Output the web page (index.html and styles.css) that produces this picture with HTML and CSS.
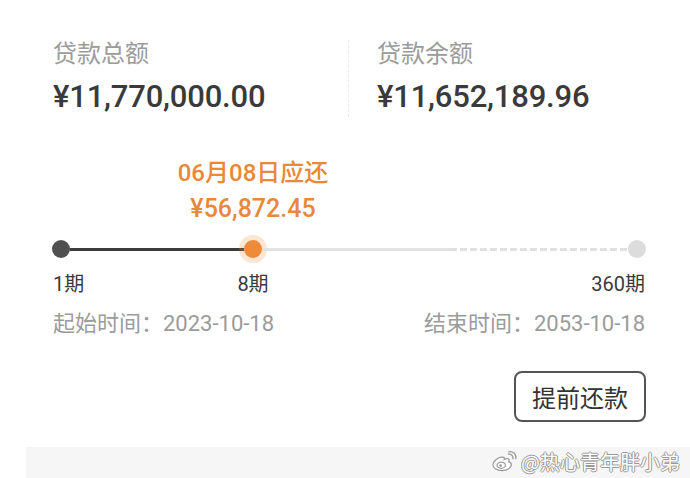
FILE: index.html
```html
<!DOCTYPE html>
<html lang="zh-CN">
<head>
<meta charset="utf-8">
<link rel="stylesheet" href="styles.css">
</head>
<body>
<div class="page">
  <section class="summary">
    <div class="col col-left">
      <div class="label">贷款总额</div>
      <div class="amount">¥11,770,000.00</div>
    </div>
    <div class="col col-right">
      <div class="label">贷款余额</div>
      <div class="amount">¥11,652,189.96</div>
    </div>
  </section>

  <section class="progress">
    <div class="due">
      <div class="due-date">06月08日应还</div>
      <div class="due-amount">¥56,872.45</div>
    </div>
    <div class="track">
      <span class="dot dot-start"></span>
      <span class="seg seg-done"></span>
      <span class="dot dot-current"></span>
      <span class="seg seg-rest"></span>
      <span class="seg seg-dashed"></span>
      <span class="dot dot-end"></span>
    </div>
    <div class="periods">
      <span class="p-first">1期</span>
      <span class="p-current">8期</span>
      <span class="p-last">360期</span>
    </div>
    <div class="dates">
      <span>起始时间：2023-10-18</span>
      <span>结束时间：2053-10-18</span>
    </div>
  </section>

  <div class="actions">
    <button class="btn-prepay">提前还款</button>
  </div>

  <div class="band">
    <div class="watermark">
      <svg class="weibo" width="26" height="22" viewBox="0 0 26 22">
        <path d="M10.5 6.2c-4.2 0.6-8.6 4.2-8.6 7.6 0 3.6 4.3 5.8 9 5.8 5.6 0 9.4-3 9.4-5.9 0-1.8-1.5-2.6-2.6-2.9 0.5-1.1 0.6-2.4-0.5-3-1.1-0.6-3 0.1-4 0.6 0.4-1.2 0.3-2.6-2.7-2.2z" fill="#fff" stroke="#9a9a9a" stroke-width="1.3"/>
        <ellipse cx="10.2" cy="14.2" rx="4.2" ry="3.1" fill="#fff" stroke="#9a9a9a" stroke-width="1.2"/>
        <circle cx="9.6" cy="14.6" r="1.3" fill="#9a9a9a"/>
        <path d="M17.5 3.2c2.6-0.5 4.9 1.6 4.4 4.4" fill="none" stroke="#9a9a9a" stroke-width="1.3" stroke-linecap="round"/>
        <path d="M17.8 0.8c4.2-0.8 7.8 2.6 7 6.9" fill="none" stroke="#9a9a9a" stroke-width="1.3" stroke-linecap="round"/>
      </svg>
      <span class="wm-text">@热心青年胖小弟</span>
    </div>
  </div>
</div>
</body>
</html>
```

FILE: styles.css
```css
* { box-sizing: border-box; }
html, body { margin: 0; padding: 0; background: #fff; }
body {
  font-family: Roboto, "Noto Sans CJK SC", "Noto Sans", sans-serif;
  color: #333;
}
.page { width: 690px; height: 478px; overflow: hidden; }

.summary {
  display: grid;
  grid-template-columns: 348px 1fr;
  padding-top: 36px;
}
.col-left { padding-left: 53px; }
.col-right {
  padding-left: 28px;
  border-left: 1px dashed #ececec;
  margin-top: 4px;
  margin-bottom: 6px;
}
.col-right .label { margin-top: -4px; }
.label {
  font-family: "Noto Sans CJK SC", sans-serif;
  font-size: 24px;
  line-height: 32px;
  color: #9b9b9b;
}
.amount {
  margin-top: 9px;
  font-size: 31px;
  line-height: 40px;
  font-weight: 500;
  color: #3a3a3a;
  letter-spacing: -0.2px;
}

.progress { margin-top: 36px; }
.due {
  width: 200px;
  margin-left: 153px;
  text-align: center;
  color: #e8893a;
  font-weight: 500;
}
.due-date {
  font-size: 24px;
  line-height: 28px;
}
.due-amount {
  margin-top: 8px;
  font-size: 25px;
  line-height: 28px;
}

.track {
  display: flex;
  align-items: center;
  width: 594px;
  height: 18px;
  margin: 17px 0 0 52px;
}
.dot {
  flex: none;
  width: 18px;
  height: 18px;
  border-radius: 50%;
}
.dot-start { background: #505050; }
.dot-current {
  background: #ef8b38;
  box-shadow: 0 0 0 5px rgba(239, 139, 56, 0.22);
}
.dot-end { background: #dcdcdc; }
.seg { flex: none; height: 3px; }
.seg-done { width: 174px; background: #3c3c3c; }
.seg-rest { width: 188px; background: #e2e2e2; }
.seg-dashed {
  flex: 1;
  background: repeating-linear-gradient(90deg, #e0e0e0 0 7px, transparent 7px 10px);
}

.periods {
  display: flex;
  margin: 13px 45px 0 53px;
  font-size: 20px;
  line-height: 26px;
  color: #3a3a3a;
}
.p-first { width: 170px; }
.p-current { width: 60px; text-align: center; }
.p-last { flex: 1; text-align: right; }

.dates {
  display: flex;
  justify-content: space-between;
  margin: 14px 45px 0 53px;
  font-size: 22px;
  line-height: 26px;
  color: #9b9b9b;
}

.actions {
  display: flex;
  justify-content: flex-end;
  margin: 34px 44px 0 0;
}
.btn-prepay {
  width: 132px;
  height: 51px;
  border: 2px solid #555;
  border-radius: 8px;
  background: #fff;
  font-family: "Noto Sans CJK SC", sans-serif;
  font-size: 24px;
  color: #333;
  padding: 0;
}

.band {
  margin: 25px 0 0 26px;
  height: 40px;
  background: #f6f6f6;
  display: flex;
  justify-content: flex-end;
  padding: 3px 10px 0 0;
}
.watermark {
  display: flex;
  align-items: center;
  gap: 4px;
  height: 24px;
}
.wm-text {
  font-family: "Noto Sans CJK SC", sans-serif;
  font-size: 20px;
  line-height: 24px;
  color: #fff;
  text-shadow: -1px 0 #999, 1px 0 #999, 0 -1px #999, 0 1px #999;
}
```
